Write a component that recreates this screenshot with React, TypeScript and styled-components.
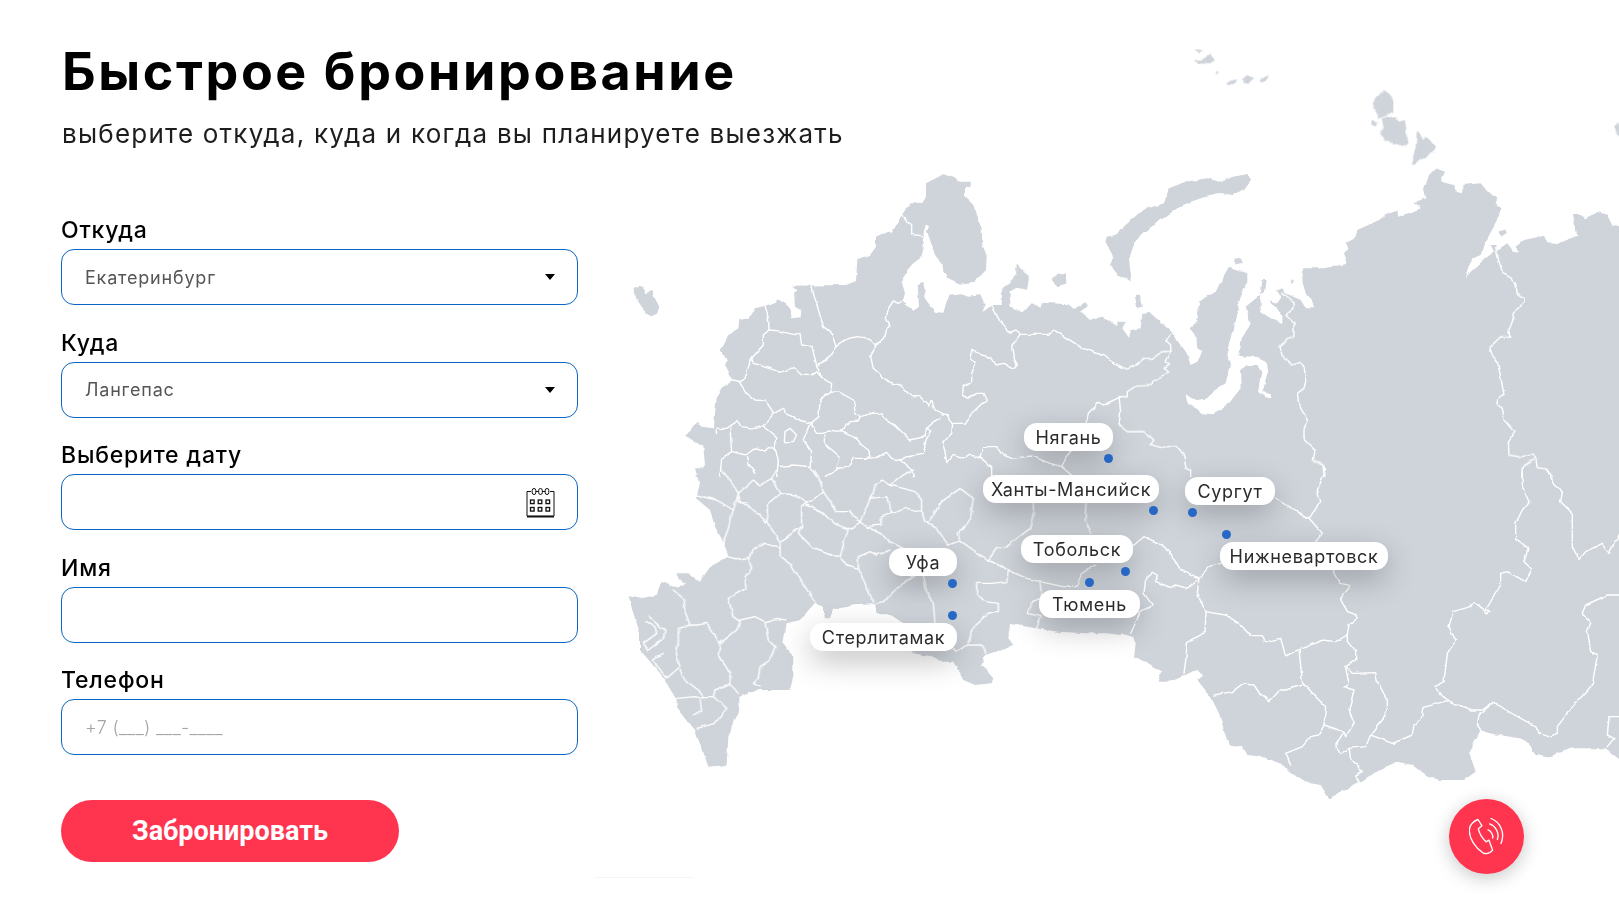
import React from "react";
import styled, { createGlobalStyle } from "styled-components";

const Global = createGlobalStyle`
  html, body { margin: 0; padding: 0; background: #fff; overflow: hidden; }
  * { box-sizing: border-box; }
`;

const FONT = `Inter, "Noto Sans", sans-serif`;
const PANEL_X = 590;

const Page = styled.main`
  display: flex;
  width: 1619px;
  height: 915px;
  font-family: ${FONT};
  color: #000;
`;
const FormColumn = styled.section`
  flex: 0 0 ${PANEL_X}px;
  width: ${PANEL_X}px;
  min-width: 0;
  padding: 39px 12px 0 61px;
  position: relative;
  z-index: 1;
`;
const Title = styled.h1`
  margin: 0 0 0 1px;
  font-size: 52px;
  line-height: 66px;
  font-weight: 700;
  letter-spacing: 2.6px;
  white-space: nowrap;
`;
const Subtitle = styled.p`
  margin: 12px 0 0 1px;
  font-size: 26px;
  line-height: 34px;
  font-weight: 400;
  letter-spacing: 1.22px;
  color: #1d1d1d;
  white-space: nowrap;
`;
const Form = styled.form`
  display: flex;
  flex-direction: column;
  width: 517px;
  margin-top: 66px;
`;
const Field = styled.label`
  display: block;
  margin-bottom: 24.5px;
`;
const FieldLabel = styled.span`
  display: block;
  height: 32px;
  font-size: 23px;
  line-height: 26px;
  font-weight: 500;
  letter-spacing: 0.8px;
`;
const Control = styled.div`
  display: flex;
  align-items: center;
  height: 56px;
  padding: 0 22px 0 23px;
  border: 1px solid #0a66c2;
  border-radius: 13px;
  background: #fff;
`;
const Select = styled.select`
  flex: 1;
  min-width: 0;
  appearance: none;
  border: 0;
  outline: 0;
  padding: 0;
  margin: 0;
  background: transparent;
  font: 400 18px ${FONT};
  letter-spacing: 0.8px;
  color: #555;
`;
const Input = styled.input`
  flex: 1;
  min-width: 0;
  border: 0;
  outline: 0;
  padding: 0;
  background: transparent;
  font: 300 18px ${FONT};
  letter-spacing: 0.3px;
  color: #444;
  &::placeholder { color: #a5a5a5; opacity: 1; }
`;
const Caret = styled.span`
  width: 0;
  height: 0;
  border-left: 5px solid transparent;
  border-right: 5px solid transparent;
  border-top: 6px solid #000;
`;
const SubmitButton = styled.button`
  align-self: flex-start;
  width: 338px;
  height: 62px;
  margin-top: 20px;
  border: 0;
  border-radius: 31px;
  background: #ff344f;
  color: #fff;
  font: 700 27px Roboto, sans-serif;
`;
const MapPanel = styled.section`
  flex: 1;
  position: relative;
  min-width: 0;
`;
const MapSvg = styled.svg`
  display: block;
  width: 100%;
  height: 100%;
`;
const Pin = styled.span<{ $x: number; $y: number }>`
  position: absolute;
  left: ${(p) => p.$x - PANEL_X - 4.5}px;
  top: ${(p) => p.$y - 4.5}px;
  width: 9px;
  height: 9px;
  border-radius: 50%;
  background: #2668c4;
`;
const CityTag = styled.span<{ $x: number; $y: number; $w: number }>`
  position: absolute;
  left: ${(p) => p.$x - PANEL_X}px;
  top: ${(p) => p.$y}px;
  width: ${(p) => p.$w}px;
  height: 28px;
  display: flex;
  align-items: center;
  justify-content: center;
  border-radius: 13px;
  background: #fff;
  box-shadow: 0 10px 30px rgba(0, 0, 0, 0.25);
  font-size: 18px;
  font-weight: 400;
  letter-spacing: 0.67px;
  color: #2b2b2b;
  white-space: nowrap;
`;
const CallButton = styled.button`
  position: absolute;
  left: ${1449 - PANEL_X}px;
  top: 798.5px;
  width: 75px;
  height: 75px;
  padding: 0;
  border: 0;
  border-radius: 50%;
  background: #ff344f;
  box-shadow: 0 4px 18px rgba(0, 0, 0, 0.22);
  display: flex;
  align-items: center;
  justify-content: center;
`;

type Piece = { x: number; y: number; land: string[]; lines: string[] };

const pieces: Piece[] = [
  {
    x: 620,
    y: 165,
    land: [
      "37,370 60,362 72,365 75,385 97,378 105,400 118,425 112,445 93,456 65,425 48,400",
      "1295,345 1315,325 1335,330 1340,355 1315,365",
      "1460,215 1503,205 1503,330 1490,325 1470,300 1480,280 1465,245 1455,235",
      "228,935 255,900 250,845 225,830 195,815 230,770 245,785 282,790 285,745 290,700 310,665 340,645 315,600 320,585 302,555 325,510 355,490 358,465 385,460 405,430 435,422 470,410 475,403 510,430 515,458 540,455 542,435 525,425 522,380 535,372 515,362 678,360 708,348 712,282 750,270 768,245 768,215 805,197 815,205 845,150 870,115 908,113 918,95 918,55 970,28 1005,40 1020,50 1052,50 1052,67 1035,65 1035,95 1060,120 1068,150 1085,190 1087,240 1100,270 1098,315 1065,350 1020,356 985,340 970,320 968,300 945,270 925,210 920,195 928,185 918,178 908,212 908,250 900,280 880,295 862,315 845,350 855,385 848,410 880,437 897,425 893,360 910,353 918,405 945,440 970,443 985,392 1025,388 1045,395 1080,390 1097,418 1085,445 1115,420 1145,420 1147,370 1170,352 1188,330 1190,295 1228,335 1220,375 1190,368 1168,380 1172,425 1210,442 1235,415 1265,425 1268,413 1345,418 1362,432 1395,412 1402,425 1380,440 1410,465 1445,455 1503,490 1503,935",
    ],
    lines: [
      "575,360 585,400 610,485 635,505 648,545 620,585 590,600",
      "648,545 680,522 712,515 750,520 767,543 795,515 800,490 810,483 798,465 805,430 820,408 835,415 848,408",
      "767,543 752,575 760,610 805,650 840,660 875,695 900,695 925,720 935,708 945,735 970,748 980,748 998,775 1035,775 1055,745 1100,703 1092,685 1070,685 1048,700 1028,690 1030,660 1055,650 1055,625 1068,595 1052,580 1052,553 1085,570 1115,578 1128,600 1150,595 1180,613 1192,600 1180,575 1175,545 1200,508 1285,508 1305,497 1385,548 1445,570 1503,605",
      "1115,420 1140,470 1170,505 1185,495 1200,508",
      "970,748 920,790 935,795 918,825 910,865 880,870 840,885 875,915 880,935",
      "998,775 995,805 968,835 975,860 980,893 1000,868 1035,880 1050,870 1080,878 1088,845 1130,845 1145,868 1175,880 1235,873 1290,895 1325,905 1335,885 1345,870 1395,790 1405,745 1435,712 1450,720 1503,695",
      "1325,905 1360,935",
      "1080,878 1115,905 1115,935",
      "845,150 875,180 875,208 905,212",
      "435,422 445,460 447,495 430,510 430,540 395,580 375,640 358,650 340,645",
      "447,495 470,497 520,508 540,505 545,540 575,545 590,600 605,640 590,620 570,632 545,630 520,608 480,622 450,610 400,595 395,580",
      "605,640 635,655 632,682 600,705 597,755 572,775 540,765 495,745 490,730 462,745 437,708 405,705 375,680 358,650",
      "632,682 655,680 700,705 705,740 720,755 715,768 690,770 660,800 625,795 610,805 590,805 570,775",
      "720,755 760,745 785,745 800,768 825,780 870,825 915,815 920,790",
      "660,800 700,815 725,840 745,855 750,875 730,880 700,880 685,905 650,915 660,875 612,835 615,810",
      "730,880 770,878 800,862 815,880 840,885",
      "462,745 430,782 405,790 365,785 350,770 320,790 288,790 290,805",
      "430,782 470,815 465,850 475,890 470,935",
      "330,790 335,860 378,870 408,848 435,858 445,848 465,850",
      "335,860 305,880 300,935",
      "378,870 385,900 405,925",
      "570,775 550,825 575,860 570,905 590,935",
      "475,905 520,900 570,905",
      "650,915 615,935",
      "495,800 510,790 530,810 520,830 493,830 495,800",
      "515,458 540,455 542,435",
    ],
  },
  {
    x: 620,
    y: 470,
    land: [
      "228,-5 240,40 228,85 270,120 285,170 310,215 325,260 270,290 240,335 205,310 165,310 195,345 160,350 125,335 110,375 65,385 30,375 35,415 60,490 60,540 125,615 170,690 170,710 225,780 255,860 265,890 320,885 325,800 358,720 358,680 415,660 510,660 520,620 520,560 490,520 500,460 540,450 585,398 605,410 615,445 630,445 640,418 685,410 700,403 765,400 770,430 805,430 850,460 880,550 940,560 965,575 1000,575 1030,630 1065,645 1115,640 1120,625 1085,585 1095,555 1125,545 1165,530 1180,525 1165,505 1170,462 1250,475 1310,485 1400,490 1460,490 1503,495 1503,-5",
    ],
    lines: [
      "305,0 330,30 355,70 400,30 420,45 455,25 470,0",
      "355,70 340,120 325,175 310,215",
      "228,75 290,90 340,120",
      "355,95 400,120 440,155 480,215 480,260 515,285 545,335 585,395",
      "355,70 355,95 380,100",
      "455,25 480,70 445,100 445,130 440,155",
      "480,70 530,75 560,100 545,110 545,170 480,215",
      "560,100 610,65 595,20 583,0",
      "610,65 650,125 690,125 720,155 700,175 680,175 640,160 610,130 560,105",
      "720,155 750,85 800,80 815,130 785,140 782,165 740,170 720,155",
      "750,85 760,70 765,40 790,30 810,45 850,55 885,65 905,90 905,125 860,115 815,130",
      "905,125 915,155 950,175 985,225",
      "810,45 840,20 880,0",
      "545,170 535,190 580,235 640,258 660,258 685,175",
      "660,258 680,285 715,295 735,340 760,395",
      "715,295 715,260 750,245 770,255 810,240",
      "740,170 790,195 810,215 850,235",
      "480,235 435,220 405,235 385,265 360,270 325,260",
      "385,265 395,295 375,320 378,355 325,385 340,440 360,455 350,480 300,520 280,490 260,460 230,465 210,465 190,410 195,390 160,360",
      "210,465 175,475 175,515 165,535 180,590 140,625 95,565 130,550",
      "360,450 405,440 435,455 470,445 497,450",
      "435,455 445,510 465,530 450,570 420,590 415,625 400,640 420,650",
      "300,520 295,555 330,610 330,640 285,660 280,680 250,680 235,660 195,630 180,600",
      "330,640 355,670",
      "280,680 320,715 285,760 230,775",
      "250,685 225,680 170,685",
      "240,690 245,720 220,735",
      "85,438 115,465 135,480 130,505 85,540 70,520 110,490 105,470 80,455",
      "885,315 850,340 820,365 790,395 765,400",
      "910,315 920,365 940,400 945,460",
      "985,225 1020,212 1015,190 1050,150 1060,85 1020,55 965,95 945,125 925,160",
      "1020,212 1060,240 1105,270 1165,300 1220,325 1260,335 1330,350 1368,350 1385,310 1425,285",
      "1105,270 1130,235 1160,230 1230,175 1240,130 1240,100",
      "1398,100 1395,150 1415,190",
      "1165,300 1160,335 1115,340 1070,340 1070,370 1095,395 1135,400 1135,425 1110,425 1065,465 1040,525 1085,525 1095,550",
      "1040,525 1010,545 1000,535",
      "1260,335 1265,385 1235,395 1225,430 1260,440 1250,475",
    ],
  },
  {
    x: 1119,
    y: 165,
    land: [
      "-5,205 20,180 70,135 135,115 150,70 200,50 265,40 300,50 345,35 385,27 398,45 375,75 340,90 310,85 260,95 215,110 180,125 140,155 110,175 70,205 45,235 30,280 38,350 0,330 -5,330",
      "47,390 62,385 72,425 55,430",
      "350,280 365,280 370,293 348,298",
      "515,345 525,350 518,358",
      "1140,200 1160,193 1165,205 1148,215",
      "-5,470 20,470 10,490 30,518 35,495 65,490 70,445 90,440 155,498 205,570 215,600 235,590 250,560 235,550 232,515 212,490 235,470 240,410 290,380 310,340 330,305 385,325 385,350 355,420 360,430 345,490 325,570 335,605 320,655 280,680 265,700 235,705 200,688 205,715 250,745 280,748 330,715 365,670 363,615 385,600 415,600 430,620 420,680 440,697 457,700 455,688 430,680 445,625 440,590 395,570 380,578 358,575 365,520 395,480 380,425 435,380 440,345 430,345 425,395 425,440 455,460 490,478 490,450 450,405 475,415 488,395 470,378 490,370 500,385 545,405 560,430 585,430 578,400 560,385 550,350 552,310 615,310 680,297 685,290 675,265 688,250 680,232 710,215 715,195 780,165 800,150 835,138 838,155 880,140 905,130 885,112 922,100 915,75 930,30 950,10 978,20 965,50 1005,60 1010,80 1030,85 1030,60 1085,55 1110,85 1135,100 1130,115 1147,130 1130,175 1100,230 1085,270 1060,280 1040,340 1055,320 1100,280 1125,260 1115,240 1130,240 1135,255 1165,235 1185,262 1200,262 1190,245 1215,225 1275,212 1285,235 1315,237 1340,225 1375,212 1362,150 1385,150 1400,160 1435,140 1465,150 1480,185 1503,182 1503,935 -5,935",
    ],
    lines: [
      "155,505 140,525 155,540 155,558 130,560 100,580 75,580 50,600 25,612 0,603",
      "155,558 138,590 152,600 135,610 150,620 100,650 100,658 55,660 25,680 25,695 0,695 5,740 0,780",
      "0,780 25,800 75,800 105,825 95,838 130,850 150,845 175,845 195,870 200,905 215,915 215,935",
      "490,385 525,410 525,430 500,450 525,475 525,515 505,520 483,545 490,575 520,600 545,592 555,605 560,650 555,670 535,685 540,720 565,765 555,790 555,820 585,850 580,885 615,900 618,935",
      "1130,245 1140,290 1150,320 1190,355 1195,385 1215,400 1215,410 1183,445 1180,470 1170,495 1172,517 1145,515 1112,547 1120,570 1135,590 1145,635 1155,690 1135,700 1130,715 1150,730 1155,765 1185,800 1168,830 1170,870 1200,875 1245,870 1250,880 1210,905 1208,935",
      "1250,880 1255,908 1280,912 1300,935",
    ],
  },
  {
    x: 1119,
    y: 470,
    land: [
      "-5,487 40,500 50,520 45,565 80,575 130,605 115,635 145,635 195,615 235,600 250,615 235,630 275,680 300,730 330,830 370,828 385,855 430,860 495,885 515,910 575,940 605,945 630,985 680,960 710,940 730,935 790,895 835,875 880,885 925,920 965,930 1035,930 1070,905 1050,845 1085,780 1110,790 1200,805 1230,820 1250,855 1285,862 1360,835 1460,835 1503,870 1503,-5 -5,-5",
    ],
    lines: [
      "75,200 130,225 155,250 180,295 240,325 270,290 305,280",
      "75,200 45,225 0,235",
      "240,325 205,355 170,345 155,352 110,335 115,315 100,307 80,325 75,370 100,405 65,425 35,490",
      "240,325 235,370 258,425 255,490 205,515 200,570 195,610",
      "258,425 320,435 360,460 395,497 430,497 440,515 485,505 500,558 540,538 590,520 610,510 650,515 685,495 685,515 710,545 710,570 680,590 700,610 770,608 775,635 805,690 805,720 790,750 755,795 820,820 880,795 885,765 910,745 915,712 985,692 1060,720 1090,720 1125,695 1160,720 1250,770 1260,790 1290,800 1315,790 1315,770 1360,710 1420,645 1435,555 1415,545 1405,480 1415,460 1390,430 1400,405 1465,375 1503,375",
      "540,538 550,635 590,680 620,710 615,765 675,785 680,800 705,760 690,720 705,660 675,650 690,640 680,595",
      "550,645 500,660 480,660 450,692 425,675 405,645 370,642 340,665 285,675",
      "615,765 600,795 575,800 550,830 500,850 515,885",
      "675,785 650,825 665,850 690,835 740,830 755,795",
      "690,835 695,865 730,905 710,915 720,945",
      "1125,695 1080,735 1075,765 1085,780",
      "985,690 945,650 975,635 985,550 1010,512 990,470 1002,425 1055,410 1065,395 1090,415 1105,432 1115,425 1100,420 1145,345 1145,310 1165,305 1220,335 1238,297 1215,275 1228,235 1190,205 1190,160 1210,120 1230,95 1210,50 1210,0",
      "1285,0 1305,45 1330,65 1325,95 1360,130 1360,230 1380,268 1400,245 1450,220 1470,250 1503,190",
      "1470,740 1503,740",
      "1470,740 1465,795 1485,805 1465,830",
      "620,0 595,60 605,95 570,145 610,190 590,215",
      "570,145 545,130 500,105 470,85",
      "640,300 665,340 695,347 665,385 685,425 715,435 715,445 690,465 685,495",
    ],
  },
  {
    x: 1160,
    y: 30,
    land: [
      "100,58 130,65 115,70",
      "102,90 125,88 150,72 165,90 150,100 128,98 115,105",
      "165,128 172,122 175,135",
      "198,160 215,150 232,148 225,160 205,165",
      "248,145 262,135 280,145 265,162 252,158",
      "298,150 325,135 322,150 305,158",
      "645,200 675,180 700,210 700,245 660,265 640,235",
      "665,265 708,258 715,275 735,270 745,340 735,350 700,340 680,335 660,310 670,290",
      "632,270 655,278 650,290 635,285",
      "770,310 780,305 785,330 795,320 828,350 825,365 790,385 755,405 765,370",
      "1363,290 1376,275 1380,320 1365,310",
    ],
    lines: [],
  },
];

const cities = [
  { name: "Нягань", x: 1024, y: 423, w: 89, px: 1108.3, py: 458.3 },
  { name: "Ханты-Мансийск", x: 983, y: 475, w: 176, px: 1153.3, py: 510.3 },
  { name: "Сургут", x: 1185, y: 477, w: 90, px: 1192.3, py: 512.3 },
  { name: "Нижневартовск", x: 1220, y: 542, w: 168, px: 1226.3, py: 534.3 },
  { name: "Тобольск", x: 1021, y: 535, w: 112, px: 1125.3, py: 571.3 },
  { name: "Тюмень", x: 1039, y: 590, w: 101, px: 1089.3, py: 582.7 },
  { name: "Уфа", x: 889, y: 548, w: 68, px: 952.3, py: 583.3 },
  { name: "Стерлитамак", x: 810, y: 623, w: 147, px: 952.3, py: 615.3 },
];

function RussiaMap() {
  return (
    <MapSvg viewBox={`${PANEL_X} 0 ${1619 - PANEL_X} 915`} aria-hidden="true">
      <defs>
        <filter id="coast" filterUnits="userSpaceOnUse" x={PANEL_X} y={0} width={1619 - PANEL_X} height={915}>
          <feTurbulence type="fractalNoise" baseFrequency="0.11" numOctaves={2} seed={4} result="noise" />
          <feDisplacementMap in="SourceGraphic" in2="noise" scale={3.5} xChannelSelector="R" yChannelSelector="G" />
        </filter>
      </defs>
      <g filter="url(#coast)">
        {pieces.map((piece) => (
          <g key={`${piece.x}-${piece.y}`} transform={`translate(${piece.x} ${piece.y}) scale(${1 / 3})`}>
            {piece.land.map((points) => (
              <polygon key={points} points={points} fill="#cfd4db" />
            ))}
          </g>
        ))}
        {pieces.map((piece) => (
          <g
            key={`l-${piece.x}-${piece.y}`}
            transform={`translate(${piece.x} ${piece.y}) scale(${1 / 3})`}
            fill="none"
            stroke="#fff"
            strokeWidth={4.2}
            strokeLinejoin="round"
            strokeLinecap="round"
          >
            {piece.lines.map((points) => (
              <polyline key={points} points={points} />
            ))}
          </g>
        ))}
      </g>
      <rect x={594} y={877} width={100} height={1} fill="#f5f5f5" />
    </MapSvg>
  );
}

function CalendarIcon() {
  return (
    <svg width="29" height="31" viewBox="0 0 29 31" fill="none" stroke="#111" strokeWidth="1">
      <path d="M5 4.500H1v24.500h27V4.500h-4" />
      <path d="M1 29.700h27" strokeWidth="1.600" />
      <path d="M9.800 4.500h2.900M16.300 4.500h2.900" />
      <rect x="6.200" y="1.500" width="3.600" height="6" rx="1.800" />
      <rect x="12.700" y="1.500" width="3.600" height="6" rx="1.800" />
      <rect x="19.200" y="1.500" width="3.600" height="6" rx="1.800" />
      {[13, 20.500].map((y) =>
        [4.500, 12.200, 20].map((x) => <rect key={`${x}-${y}`} x={x} y={y} width="3.600" height="3.600" strokeWidth="1.300" />)
      )}
    </svg>
  );
}

function CallIcon() {
  return (
    <svg width="36" height="37" viewBox="0 0 108 110" fill="none" stroke="#fff" strokeWidth="4" strokeLinejoin="round" strokeLinecap="round">
      <path d="M27 4 L39 23 L28 32 C31 46 41 61 51 71 L60 66 L71 96 C63 105 52 109 42 104 C18 89 2 61 1 39 C0 23 12 9 27 4 Z" />
      <path d="M66 1 C92 11 110 42 96 76" />
      <path d="M62 17 C80 23 92 46 85 64" />
      <path d="M57 35 C66 38 73 50 71 60" />
    </svg>
  );
}

export default function App() {
  return (
    <>
      <Global />
      <Page>
        <FormColumn>
          <Title>Быстрое бронирование</Title>
          <Subtitle>выберите откуда, куда и когда вы планируете выезжать</Subtitle>
          <Form>
            <Field>
              <FieldLabel>Откуда</FieldLabel>
              <Control>
                <Select defaultValue="Екатеринбург">
                  <option>Екатеринбург</option>
                </Select>
                <Caret />
              </Control>
            </Field>
            <Field>
              <FieldLabel>Куда</FieldLabel>
              <Control>
                <Select defaultValue="Лангепас">
                  <option>Лангепас</option>
                </Select>
                <Caret />
              </Control>
            </Field>
            <Field>
              <FieldLabel>Выберите дату</FieldLabel>
              <Control>
                <Input />
                <CalendarIcon />
              </Control>
            </Field>
            <Field>
              <FieldLabel>Имя</FieldLabel>
              <Control>
                <Input />
              </Control>
            </Field>
            <Field>
              <FieldLabel>Телефон</FieldLabel>
              <Control>
                <Input placeholder="+7 (___) ___-____" />
              </Control>
            </Field>
            <SubmitButton type="button">Забронировать</SubmitButton>
          </Form>
        </FormColumn>
        <MapPanel>
          <RussiaMap />
          {cities.map((c) => (
            <React.Fragment key={c.name}>
              <CityTag $x={c.x} $y={c.y} $w={c.w}>
                {c.name}
              </CityTag>
              <Pin $x={c.px} $y={c.py} />
            </React.Fragment>
          ))}
          <CallButton type="button" aria-label="Позвонить">
            <CallIcon />
          </CallButton>
        </MapPanel>
      </Page>
    </>
  );
}
